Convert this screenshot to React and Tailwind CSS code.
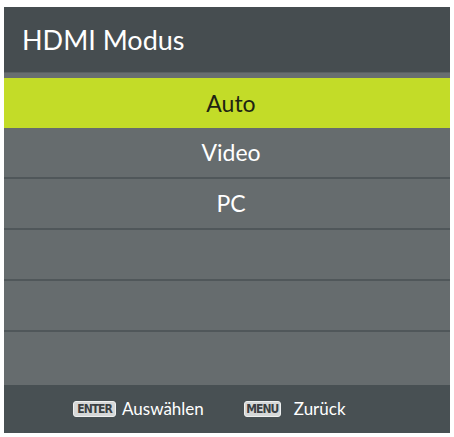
import React from 'react';

const font = { fontFamily: 'Lato, "Open Sans", sans-serif' };

function KeyBadge({ label, width }) {
    return (
        <span
            className={`inline-flex items-center justify-center h-[16px] ${width} rounded-[3px] bg-[#d6d8d8] border border-[#eef0f0] text-[#3a4042] text-[12px] font-bold tracking-[-1px] leading-none overflow-hidden`}
            style={{ fontFamily: '"DejaVu Sans Condensed", "DejaVu Sans", sans-serif' }}
        >
            {label}
        </span>
    );
}

function Row({ label, last }) {
    return (
        <div className={`flex items-center justify-center pl-2 bg-[#666c6e] text-white text-[23px] ${last ? 'h-[53px]' : 'h-[51px] border-b-2 border-[#50575a]'}`}>
            {label}
        </div>
    );
}

export default function App() {
    const items = ['Video', 'PC', '', '', ''];
    return (
        <div className="w-[454px] h-[437px] bg-white pt-[7px] pl-[4px]" style={font}>
            <div className="w-[446px] flex flex-col">
                {/* Kopfzeile */}
                <div className="h-[65px] flex items-center pl-[18px] bg-[#464d50] text-white text-[27px] leading-none">
                    HDMI Modus
                </div>
                <div className="h-[6px] bg-[#686e70] border-t border-[#5a6163]" />

                {/* Auswahl */}
                <div className="h-[50px] flex items-center justify-center pl-2 bg-[#c3dc28] text-[#1e2412] text-[23px]">
                    Auto
                </div>
                {items.map((label, i) => (
                    <Row key={i} label={label} last={i === items.length - 1} />
                ))}

                {/* Fußzeile */}
                <div className="h-[48px] flex items-center pl-[69px] bg-[#485053] text-white text-[17px]">
                    <KeyBadge label="ENTER" width="w-[43px]" />
                    <span className="ml-[6px]">Auswählen</span>
                    <span className="ml-[40px] flex"><KeyBadge label="MENU" width="w-[37px]" /></span>
                    <span className="ml-[13px]">Zurück</span>
                </div>
            </div>
        </div>
    );
}
